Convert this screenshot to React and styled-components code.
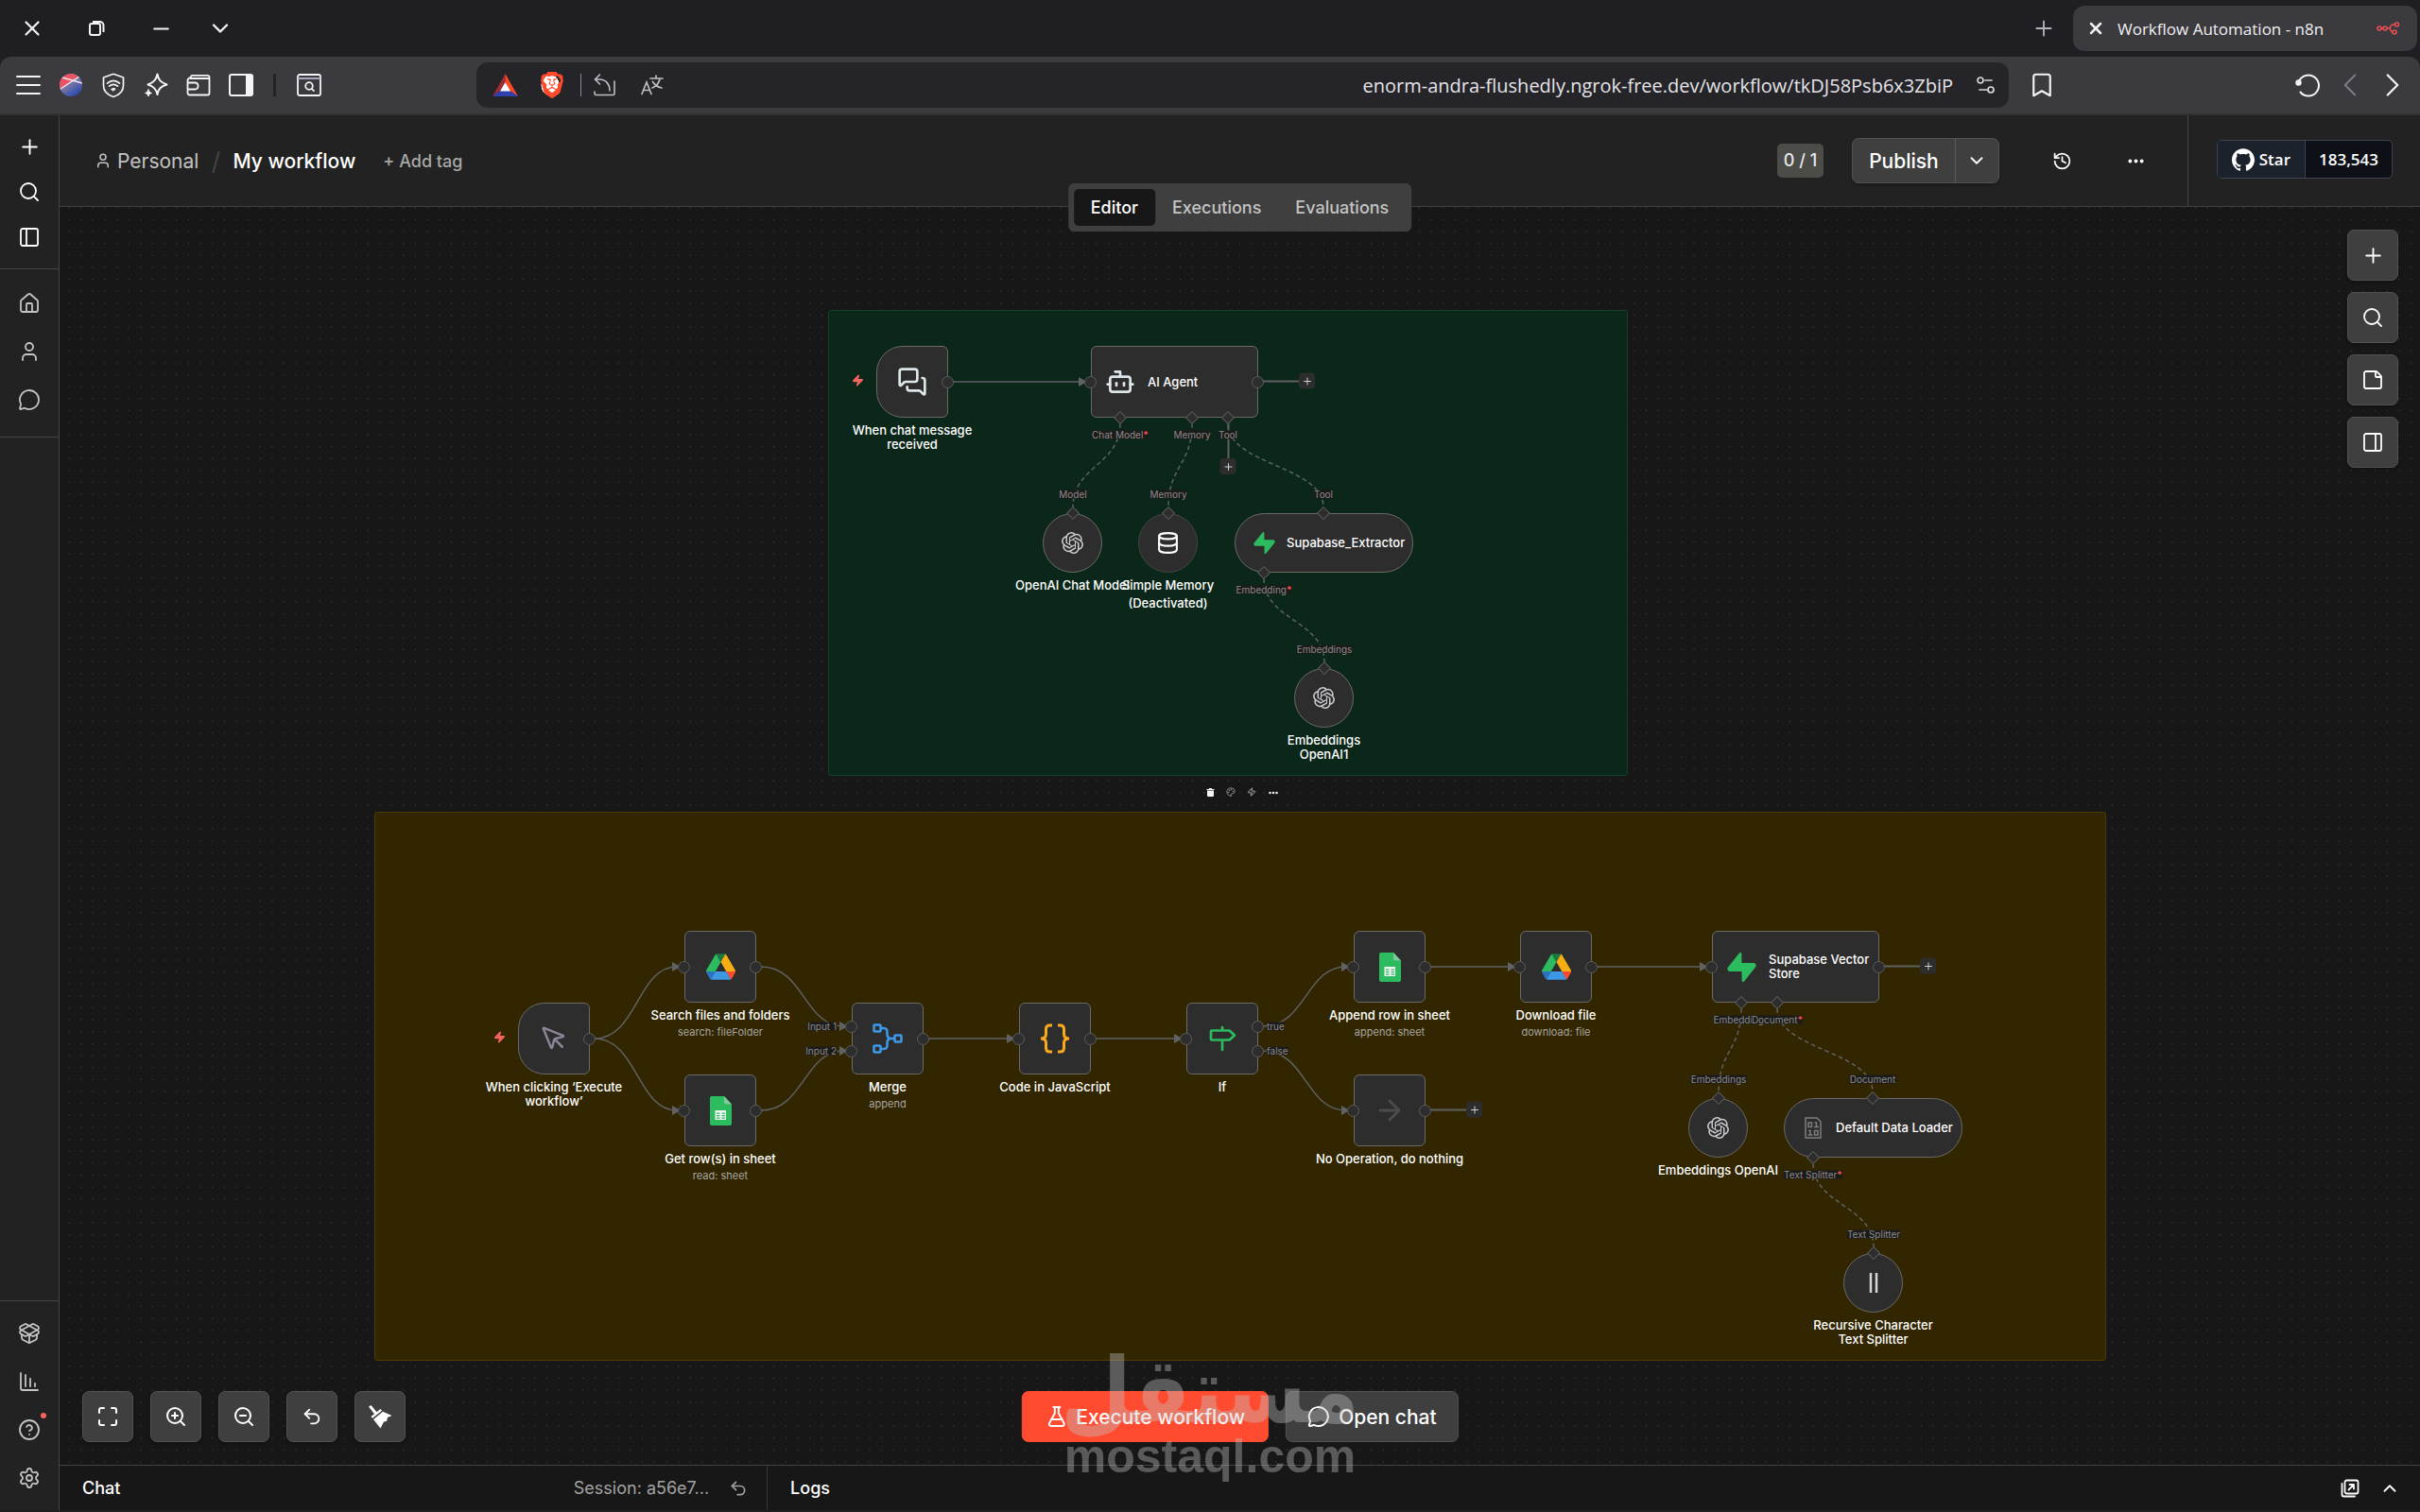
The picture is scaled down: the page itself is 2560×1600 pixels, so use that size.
import React, { useState } from 'react';
import styled, { createGlobalStyle, css } from 'styled-components';
import {
    Plus, Search, PanelLeft, PanelRight, House, User, MessageCircle, PackageOpen,
    ChartColumnDecreasing, CircleHelp, Settings, ChevronDown, ChevronUp, History,
    Ellipsis, StickyNote, Maximize, ZoomIn, ZoomOut, Undo2, FlaskConical,
    MessagesSquare, Bot, Database, MousePointer, ArrowRight, Palette, Zap,
    X, Minus, ChevronLeft, ChevronRight, Bookmark
} from 'lucide-react';
import { SiOpenai, SiSupabase, SiGithub, SiBrave } from 'react-icons/si';

const GlobalStyle = createGlobalStyle`
    * { box-sizing: border-box; }
    body {
        margin: 0;
        background: #1f1e23;
        color: #ffffff;
        font-family: Inter, "Liberation Sans", sans-serif;
    }
    button, input { font-family: inherit; }
    button {
        border: 0;
        padding: 0;
        background: none;
        color: inherit;
        cursor: pointer;
    }
    a { color: inherit; text-decoration: none; }
    svg { display: block; flex-shrink: 0; }
`;

/* ---------- icons ---------- */

const RestoreIcon = () => (
    <svg width="18" height="18" viewBox="0 0 18 18" fill="none" stroke="#f4f4f6" strokeWidth="2">
        <rect x="2" y="4" width="11" height="12" rx="2" />
        <path d="M5 2h7.5a4 4 0 0 1 4 4v7" />
    </svg>
);

const MenuIcon = () => (
    <svg width="26" height="22" viewBox="0 0 26 22" stroke="#f4f4f6" strokeWidth="2" strokeLinecap="round">
        <path d="M1 2h24M1 11h24M1 20h24" />
    </svg>
);

const BallIcon = () => (
    <svg width="24" height="24" viewBox="0 0 24 24">
        <defs>
            <clipPath id="ball"><circle cx="12" cy="12" r="12" /></clipPath>
            <linearGradient id="ballFill" x1="0" y1="0" x2="0.7" y2="1">
                <stop offset="0.4" stopColor="#8d83a3" />
                <stop offset="1" stopColor="#2848b0" />
            </linearGradient>
        </defs>
        <g clipPath="url(#ball)">
            <rect width="24" height="24" fill="url(#ballFill)" />
            <path d="M0 0h24L19 3 0 17z" fill="#ea5266" />
            <path d="M1 16 21 3M3 4l21 6" stroke="#f5e9ee" strokeWidth="1.4" />
        </g>
    </svg>
);

const ShieldIcon = () => (
    <svg width="24" height="27" viewBox="0 0 24 27" fill="none" stroke="#f4f4f6" strokeWidth="1.7" strokeLinecap="round">
        <path d="M12 1.3 22.5 5v8.5c0 6-4.5 10-10.5 12C6 23.5 1.5 19.5 1.5 13.5V5z" strokeLinejoin="round" />
        <path d="M5.5 11.2c4-3.4 9-3.4 13 0M7.5 14.2c3-2.4 6-2.4 9 0" />
        <path d="M9.8 17.2c1.5-1 3-1 4.4 0L12 19z" fill="#f4f4f6" strokeWidth="1" />
    </svg>
);

const SparkIcon = () => (
    <svg width="26" height="26" viewBox="0 0 26 26" fill="none" stroke="#f4f4f6" strokeWidth="2" strokeLinejoin="round">
        <path d="M14.5 1.5c1 6 3.5 8.5 10 11-6.5 2-9 4.5-10 10.5-1.3-6-4-8.5-10-10.5 6-2.5 8.7-5 10-11z" />
        <path d="M5 17.5c.5 2.500 1.2 3.2 3.5 4-2.3.7-3 1.4-3.5 3.5-.6-2.1-1.3-2.8-3.5-3.5 2.2-.8 2.9-1.5 3.5-4z" fill="#f4f4f6" strokeWidth="1" />
    </svg>
);

const WalletIcon = () => (
    <svg width="26" height="24" viewBox="0 0 26 24" fill="none" stroke="#f4f4f6" strokeWidth="1.8">
        <path d="M1.5 7.5c0-2 .8-2.8 2.500-3.2L6 1.8h16.5a2 2 0 0 1 2 2v16.7a2 2 0 0 1-2 2h-19a2 2 0 0 1-2-2z" />
        <path d="M4 5h20.5M2 9.5h7.5a3 3 0 0 1 3 3v1a3 3 0 0 1-3 3H2" />
    </svg>
);

const SplitIcon = () => (
    <svg width="26" height="24" viewBox="0 0 26 24">
        <rect x="1" y="1" width="24" height="22" rx="2" fill="none" stroke="#f4f4f6" strokeWidth="2" />
        <path d="M18 1h6a1.5 1.5 0 0 1 1.5 1.5v19A1.5 1.5 0 0 1 24 23h-6z" fill="#f4f4f6" />
    </svg>
);

const PageSearchIcon = () => (
    <svg width="26" height="24" viewBox="0 0 26 24" fill="none" stroke="#f4f4f6" strokeWidth="1.8">
        <rect x="1" y="1" width="24" height="22" rx="2" />
        <path d="M1 5h24" stroke="#b9b2cc" />
        <circle cx="13" cy="13" r="3.8" />
        <path d="m15.5 15.7 3 3" />
    </svg>
);

const BatIcon = () => (
    <svg width="27" height="24" viewBox="0 0 27 24">
        <path d="M13.5 0v9L8 18.5 0 24z" fill="#a02c33" />
        <path d="M13.5 0 27 24l-8.5-5.5L13.5 9z" fill="#ff4724" />
        <path d="m0 24 8-6h11l8 6z" fill="#2f3fae" />
        <path d="m13.5 9 5.5 9.5H8z" fill="#ffffff" />
    </svg>
);

const BraveLogo = styled.span`
    display: grid;
    place-items: center;
    width: 24px;
    height: 28px;
    border-radius: 10px;
    background: radial-gradient(#ffffff 55%, transparent 57%);
    color: #ff4a2b;
`;

const BypassIcon = () => (
    <svg width="24" height="24" viewBox="0 0 24 24" fill="none" stroke="#bdbdc2" strokeWidth="1.6" strokeLinecap="round">
        <path d="M1 19v2a1.5 1.5 0 0 0 1.5 1.5h18A1.5 1.5 0 0 0 22 21V8M2 6h4c7 0 11 5 11 12M6.5 1 1.500 6l5 5" />
    </svg>
);

const TranslateIcon = () => (
    <svg width="24" height="22" viewBox="0 0 24 22" fill="none" stroke="#bdbdc2" strokeWidth="1.7" strokeLinecap="round">
        <path d="M1 20.5 6 8l5 12.5M3 16.500h6M10 4h13M16 1v3M20 4.500c-1 4.500-4 8-8 9.500M12.500 7.500c2 3.500 5 5.500 9.500 6.500" />
    </svg>
);

const SiteIcon = () => (
    <svg width="20" height="18" viewBox="0 0 20 18" fill="none" stroke="#d8d8dc" strokeWidth="1.7">
        <circle cx="4" cy="4" r="3" />
        <path d="M9 4h7M3 14h8" strokeLinecap="round" />
        <circle cx="15" cy="14" r="3" />
    </svg>
);

const ReloadIcon = () => (
    <svg width="26" height="26" viewBox="0 0 26 26" fill="none" stroke="#f4f4f6" strokeWidth="2" strokeLinecap="round">
        <path d="M4 9a11 11 0 1 1 1.5 11.5" />
        <circle cx="3.5" cy="10.5" r="2.2" fill="#f4f4f6" />
    </svg>
);

const N8nIcon = () => (
    <svg width="25" height="14" viewBox="0 0 25 14" fill="none" stroke="#ea4f55" strokeWidth="1.6">
        <circle cx="3" cy="7" r="2" />
        <circle cx="9" cy="7" r="2" />
        <circle cx="21.5" cy="3" r="2" />
        <circle cx="19" cy="11" r="2" />
        <path d="M5 7h2M11 7h2c2.5 0 1.5-4 4-4h2.5M13 7c2.5 0 1.5 4 4 4" />
    </svg>
);

const BroomIcon = () => (
    <svg width="26" height="26" viewBox="0 0 26 26" fill="#ffffff">
        <path d="M1 2.5 3.5 1l7 8.5-2.5 2z" />
        <path d="m3.5 13 10-8 1.5 1.8-10 8z" />
        <path d="m6 16 10-8.3L25.5 12 21 14l-1 4-3 .5-3.5 7z" />
    </svg>
);

const DriveIcon = () => (
    <svg width="31" height="28" viewBox="0 0 87.3 78">
        <path d="m6.6 66.85 3.85 6.65c.8 1.4 1.95 2.5 3.3 3.3l13.75-23.8h-27.5c0 1.55.4 3.1 1.2 4.5z" fill="#2b72c0" />
        <path d="m43.65 25-13.75-23.8c-1.35.8-2.5 1.9-3.3 3.3l-25.4 44a9.06 9.06 0 0 0-1.2 4.5h27.5z" fill="#2dbb5f" />
        <path d="m73.55 76.8c1.35-.8 2.5-1.9 3.3-3.3l9.25-16c.8-1.4 1.2-2.95 1.2-4.5h-27.5l5.85 11.5z" fill="#ff4a32" />
        <path d="m43.65 25 13.75-23.8c-1.35-.8-2.9-1.2-4.5-1.2h-18.5c-1.6 0-3.15.45-4.5 1.2z" fill="#1a7a3f" />
        <path d="m59.8 53h-32.3l-13.75 23.8c1.35.8 2.9 1.2 4.5 1.2h50.8c1.6 0 3.15-.45 4.5-1.2z" fill="#3c98e4" />
        <path d="m73.4 26.5-12.7-22c-.8-1.4-1.95-2.5-3.3-3.3l-13.75 23.8 16.15 28h27.45c0-1.55-.4-3.1-1.2-4.5z" fill="#f7ae14" />
    </svg>
);

const SheetIcon = () => (
    <svg width="23" height="31" viewBox="0 0 23 31">
        <path d="M2 0h13l8 8.5V29a2 2 0 0 1-2 2H2a2 2 0 0 1-2-2V2a2 2 0 0 1 2-2z" fill="#2dbb5f" />
        <path d="M15 0v6.5a2 2 0 0 0 2 2h6z" fill="#7ec99a" />
        <rect x="5.5" y="15" width="11.5" height="10" fill="#f2f4f3" />
        <path d="M7 18.2h3.5M12.5 18.2H16M7 20.7h3.5M12.5 20.7H16M7 23.2h3.5M12.5 23.2H16" stroke="#2dbb5f" strokeWidth="1.2" />
    </svg>
);

const MergeIcon = () => (
    <svg width="32" height="32" viewBox="0 0 32 32" fill="none" stroke="#3c98e8" strokeWidth="2.6">
        <rect x="1.5" y="1.5" width="7" height="7" rx="1" />
        <rect x="1.5" y="23.5" width="7" height="7" rx="1" />
        <rect x="23.5" y="12.5" width="7" height="7" rx="1" />
        <path d="M8.5 5h3c4.5 0 4 3 4 6 0 3.5 1 5 4 5h4M8.5 27h3c4.5 0 4-3 4-6 0-3.5 1-5 4-5" />
    </svg>
);

const CodeIcon = () => (
    <svg width="30" height="32" viewBox="0 0 30 32" fill="none" stroke="#fba91b" strokeWidth="3">
        <path d="M12 2H9.5Q5.5 2 5.5 6v5.5Q5.5 16 0 16q5.5 0 5.5 4.5V26q0 4 4 4H12" />
        <path d="M18 2h2.5q4 0 4 4v5.5q0 4.5 5.5 4.5-5.5 0-5.5 4.5V26q0 4-4 4H18" />
    </svg>
);

const SignIcon = () => (
    <svg width="29" height="28" viewBox="0 0 29 28" fill="none" stroke="#2dbb5f" strokeWidth="2.7" strokeLinecap="round" strokeLinejoin="round">
        <path d="M3 5.5h18.5l5.5 5-5.5 5H3a1 1 0 0 1-1-1v-8a1 1 0 0 1 1-1zM14 2v3M14 16v10" />
    </svg>
);

const BinaryFileIcon = () => (
    <svg width="18" height="23" viewBox="0 0 18 23" fill="none" stroke="#7d7d7d" strokeWidth="1.5">
        <path d="M1 1h12l4 4v17H1z" />
        <rect x="4" y="6" width="3.5" height="4.5" />
        <path d="M10.5 6h2v4.5M10 10.5h5M4 14.5h2V19M3.5 19h5" />
        <rect x="10.5" y="14.5" width="3.5" height="4.5" />
    </svg>
);

const BarsIcon = () => (
    <svg width="10" height="21" viewBox="0 0 10 21" stroke="#d3d7dc" strokeWidth="2.5">
        <path d="M2 0v21M8 0v21" />
    </svg>
);

const TrashIcon = () => (
    <svg width="9" height="9" viewBox="0 0 9 9" fill="#f4f4f4">
        <path d="M3 0h3v1h2.5v1H.5V1H3zM1 2.5h7V8a1 1 0 0 1-1 1H2a1 1 0 0 1-1-1z" />
    </svg>
);

const PopOutIcon = () => (
    <svg width="20" height="20" viewBox="0 0 20 20" fill="none" stroke="#ffffff" strokeWidth="1.8" strokeLinecap="round" strokeLinejoin="round">
        <rect x="4.5" y="1.5" width="14" height="14" rx="2" />
        <path d="M1.500 5v11.500a2 2 0 0 0 2 2H15M8.500 11.500l5-5M9.500 6h4.500v4.500" />
    </svg>
);

const BoltIcon = () => <Zap size={13} color="#f8625f" fill="#f8625f" strokeWidth={2} />;

/* ---------- browser chrome ---------- */

const Browser = styled.div`
    display: flex;
    flex-direction: column;
    min-height: 100vh;
    padding-bottom: 2px;
`;

const TitleBar = styled.div`
    display: flex;
    align-items: center;
    height: 60px;
    padding-right: 3px;
    font-family: "Open Sans", "Noto Sans", sans-serif;
`;

const WindowButton = styled.button`
    display: grid;
    place-items: center;
    width: ${props => props.$narrow ? 57 : 68}px;
    height: 60px;
    color: #f4f4f6;
`;

const Spacer = styled.div`
    flex: 1;
`;

const NewTab = styled.button`
    display: grid;
    place-items: center;
    width: 62px;
    height: 48px;
    color: #b4b4ba;
`;

const Tab = styled.div`
    display: flex;
    align-items: center;
    gap: 13px;
    width: 364px;
    height: 48px;
    padding: 0 18px 0 14px;
    border-radius: 12px;
    background: #3b3a3f;
    font-size: 17px;
    color: #f0f0f2;

    span { flex: 1; white-space: nowrap; }
`;

const Toolbar = styled.div`
    display: flex;
    align-items: center;
    height: 62px;
    padding: 0 7px;
    border-bottom: 2px solid #323135;
    border-radius: 12px 12px 0 0;
    background: #3b3a3f;
`;

const ToolButton = styled.button`
    display: grid;
    place-items: center;
    width: ${props => props.$wide ? 50 : 45}px;
    height: 48px;
    color: ${props => props.$dim ? '#7d7c82' : '#f4f4f6'};
`;

const ToolDivider = styled.i`
    width: 3px;
    height: 24px;
    margin: 0 12px;
    background: #232227;
`;

const AddressBar = styled.div`
    display: flex;
    align-items: center;
    flex: 1;
    height: 48px;
    margin: 0 12px 0 155px;
    padding: 0 2px 0 8px;
    border-radius: 12px;
    background: #252429;

    i { width: 1px; height: 24px; margin-left: 7px; background: #8a898f; }
`;

const AddressInput = styled.input`
    flex: 1;
    height: 40px;
    padding: 0 12px 0 0;
    border: 0;
    outline: 0;
    background: transparent;
    color: #e4e4e8;
    font: 20px "Open Sans", "Noto Sans", sans-serif;
    text-align: right;
`;

const AfterAddress = styled.div`
    width: 236px;
`;

/* ---------- app shell ---------- */

const Shell = styled.div`
    display: flex;
    flex: 1;
    background: #171717;
`;

const Sidebar = styled.nav`
    display: flex;
    flex-direction: column;
    width: 63px;
    border-right: 1px solid #444444;
    background: #222222;
`;

const SideGroup = styled.div`
    display: flex;
    flex-direction: column;
    padding: ${props => props.$pad};
    border-top: ${props => props.$line ? '1px solid #444444' : '0'};
    color: ${props => props.$bright ? '#ffffff' : '#c4c4c4'};
`;

const SideButton = styled.button`
    position: relative;
    display: grid;
    place-items: center;
    height: ${props => props.$short ? 48 : 51}px;
`;

const RedDot = styled.i`
    position: absolute;
    top: 8px;
    left: 43px;
    width: 6px;
    height: 6px;
    border-radius: 50%;
    background: #f8625f;
`;

const Main = styled.main`
    display: flex;
    flex-direction: column;
    flex: 1;
    min-width: 0;
`;

const Header = styled.header`
    position: relative;
    display: flex;
    align-items: center;
    height: 97px;
    padding-left: 37px;
    border-bottom: 1px solid #3f3f3f;
    background: #222222;
    font-size: 21px;
`;

const Crumb = styled.a`
    display: flex;
    align-items: center;
    gap: 6px;
    color: #c2c2c2;
`;

const Slash = styled.span`
    width: 36px;
    color: #444444;
    font-size: 26px;
    text-align: center;
`;

const Title = styled.h1`
    margin: 0;
    font-size: 21px;
    font-weight: 500;
`;

const AddTag = styled.button`
    margin-left: 29px;
    color: #a8a8a8;
    font-size: 18px;
    font-weight: 500;
`;

const Count = styled.span`
    padding: 0 7px;
    border-radius: 5px;
    background: #4b4b48;
    color: #e8e8e8;
    font-size: 18px;
    font-weight: 500;
    line-height: 36px;
`;

const raised = css`
    border: 1px solid #525252;
    border-radius: 7px;
    background: #3f3f3f;
    color: #ffffff;
`;

const PublishGroup = styled.div`
    ${raised}
    display: flex;
    height: 48px;
    margin: 0 43px 0 30px;
    box-shadow: 0 2px 3px rgba(0, 0, 0, .25);
`;

const PublishButton = styled.button`
    padding: 0 17px;
    font-size: 21px;
    font-weight: 500;
`;

const PublishMore = styled.button`
    display: grid;
    place-items: center;
    width: 46px;
    border-left: 1px solid #5a5a5a;
`;

const HeaderIcon = styled.button`
    display: grid;
    place-items: center;
    width: 48px;
    height: 48px;
    margin-right: 30px;
`;

const StarBox = styled.div`
    display: flex;
    align-items: center;
    align-self: stretch;
    padding: 0 29px 3px 30px;
    border-left: 1px solid #444444;
`;

const StarLink = styled.a`
    display: flex;
    align-items: center;
    height: 41px;
    border: 1px solid #3d444d;
    border-radius: 5px;
    background: #0d1117;
    font: 600 17px "Open Sans", "Noto Sans", sans-serif;
    overflow: hidden;

    span { padding: 0 14px; }
    span:first-child {
        display: flex;
        align-items: center;
        gap: 5px;
        height: 100%;
        padding: 0 15px;
        border-right: 1px solid #3d444d;
        background: #1c222c;
    }
`;

const Tabs = styled.div`
    position: absolute;
    top: 72px;
    left: 50%;
    z-index: 2;
    display: flex;
    padding: 6px;
    border-radius: 6px;
    background: #3f3f3f;
    transform: translateX(-50%);
`;

const TabButton = styled.button`
    height: 39px;
    padding: 0 18px;
    border-radius: 5px;
    background: ${props => props.$active ? '#171717' : 'transparent'};
    color: ${props => props.$active ? '#ffffff' : '#c4c4c4'};
    font-size: 18px;
    font-weight: 500;
`;

/* ---------- canvas ---------- */

const Canvas = styled.section`
    position: relative;
    flex: 1;
    min-height: 1331px;
    overflow: hidden;
`;

const Layer = styled.svg`
    position: absolute;
    inset: 0;
    width: 100%;
    height: 100%;
    pointer-events: none;
`;

const Sticky = styled.div`
    position: absolute;
    left: ${props => props.$x}px;
    top: ${props => props.$y}px;
    width: ${props => props.$w}px;
    height: ${props => props.$h}px;
    border: 1px solid ${props => props.$line};
    border-radius: 3px;
    background: ${props => props.$fill};
`;

const StickyTools = styled.div`
    position: absolute;
    left: 1212px;
    top: 614px;
    display: flex;
    gap: 12px;
    align-items: center;

    button { width: 10px; height: 10px; display: grid; place-items: center; }
`;

const NodeBox = styled.div`
    position: absolute;
    left: ${props => props.$x}px;
    top: ${props => props.$y}px;
`;

const Shape = styled.div`
    display: flex;
    align-items: center;
    justify-content: ${props => props.$slot ? 'flex-start' : 'center'};
    width: ${props => props.$w}px;
    height: ${props => props.$h}px;
    padding-left: ${props => props.$lead || 0}px;
    border: 1px solid ${props => props.$off ? '#454545' : '#6b6a66'};
    border-radius: ${props => props.$radius};
    background: #2d2d2d;
    color: #ffffff;
`;

const NodeIcon = styled.span`
    display: grid;
    place-items: center;
    width: ${props => props.$slot ? `${props.$slot}px` : 'auto'};
`;

const InnerName = styled.span`
    font-size: 13px;
    font-weight: 500;
    line-height: 15px;
    white-space: pre;
`;

const Caption = styled.div`
    position: absolute;
    top: 100%;
    left: 50%;
    padding-top: 6px;
    transform: translateX(-50%);
    font-size: 13px;
    font-weight: 500;
    line-height: 15px;
    text-align: center;
    white-space: pre;

    small {
        display: block;
        margin-top: 3px;
        color: #a8a4a0;
        font-size: 11px;
        font-weight: 400;
    }

    em { display: block; margin-top: 4px; font-style: normal; }
`;

const Dot = styled.i`
    position: absolute;
    left: ${props => props.$x}px;
    top: ${props => props.$y}px;
    width: 13px;
    height: 13px;
    margin: -6px 0 0 -7px;
    border: 1px solid #5c5c5c;
    border-radius: 50%;
    background: #2d2d2d;
`;

const Diamond = styled.i`
    position: absolute;
    left: ${props => props.$x}px;
    top: ${props => props.$y}px;
    width: 10px;
    height: 10px;
    margin: -5px;
    border: 1px solid #5c5c5c;
    background: #2d2d2d;
    transform: rotate(45deg);
`;

const PortLabel = styled.span`
    position: absolute;
    left: ${props => props.$x}px;
    top: ${props => props.$y}px;
    transform: translate(${props => props.$align || '-50%'}, -50%);
    background: #1c1b1b;
    color: #8c8a88;
    font-size: 10px;
    line-height: 9px;
    white-space: nowrap;

    b { color: #f8524f; }
`;

const AddNext = styled.div`
    position: absolute;
    left: ${props => props.$x}px;
    top: ${props => props.$y}px;
    display: flex;
    flex-direction: ${props => props.$down ? 'column' : 'row'};
    align-items: center;
    transform: ${props => props.$down ? 'translateX(-50%)' : 'translateY(-50%)'};

    i {
        width: ${props => props.$down ? '2px' : '38px'};
        height: ${props => props.$down ? '38px' : '2px'};
        background: #5f6163;
    }

    button {
        display: grid;
        place-items: center;
        width: 17px;
        height: 17px;
        border-radius: 4px;
        background: #2d2d2d;
        color: #d0d0d0;
    }
`;

const TriggerMark = styled.span`
    position: absolute;
    right: calc(100% + 13px);
    top: 30px;
`;

const sizes = {
    trigger: { w: 76, h: 76, radius: '28px 6px 6px 28px' },
    square: { w: 76, h: 76, radius: '6px' },
    wide: { w: 177, h: 76, radius: '6px', lead: 1, slot: 58 },
    circle: { w: 63, h: 63, radius: '50%' },
    pill: { w: 189, h: 63, radius: '32px', lead: 6, slot: 48 }
};

const openai = <SiOpenai size={23} color="#c9cbce" />;

// left/right are y offsets of round ports, top/bottom are x offsets of diamonds
const nodes = [
    { x: 864, y: 147, kind: 'trigger', icon: <MessagesSquare size={32} color="#dde7ea" />, name: 'When chat message\nreceived', right: [[38]] },
    { x: 1091, y: 147, kind: 'wide', icon: <Bot size={32} color="#dde7ea" />, inner: 'AI Agent', left: [[38]], right: [[38]],
        bottom: [[31, 'Chat Model', true], [107, 'Memory'], [145, 'Tool']], next: true, nextDown: 145 },
    { x: 1040, y: 324, kind: 'circle', icon: openai, name: 'OpenAI Chat Model', top: [[32, 'Model']] },
    { x: 1141, y: 324, kind: 'circle', icon: <Database size={25} />, name: 'Simple Memory', note: '(Deactivated)', off: true, top: [[32, 'Memory']] },
    { x: 1243, y: 324, kind: 'pill', icon: <SiSupabase size={23} color="#2dbb5f" />, inner: 'Supabase_Extractor', top: [[94, 'Tool']], bottom: [[31, 'Embedding', true]] },
    { x: 1306, y: 488, kind: 'circle', icon: openai, name: 'Embeddings\nOpenAI1', top: [[32, 'Embeddings']] },
    { x: 485, y: 842, kind: 'trigger', icon: <MousePointer size={30} color="#8b8597" />, name: 'When clicking ‘Execute\nworkflow’', right: [[38]] },
    { x: 661, y: 766, kind: 'square', icon: <DriveIcon />, name: 'Search files and folders', sub: 'search: fileFolder', left: [[38]], right: [[38]] },
    { x: 661, y: 918, kind: 'square', icon: <SheetIcon />, name: 'Get row(s) in sheet', sub: 'read: sheet', left: [[38]], right: [[38]] },
    { x: 838, y: 842, kind: 'square', icon: <MergeIcon />, name: 'Merge', sub: 'append', left: [[25, 'Input 1'], [51, 'Input 2']], right: [[38]] },
    { x: 1015, y: 842, kind: 'square', icon: <CodeIcon />, name: 'Code in JavaScript', left: [[38]], right: [[38]] },
    { x: 1192, y: 842, kind: 'square', icon: <SignIcon />, name: 'If', left: [[38]], right: [[25, 'true'], [51, 'false']] },
    { x: 1369, y: 766, kind: 'square', icon: <SheetIcon />, name: 'Append row in sheet', sub: 'append: sheet', left: [[38]], right: [[38]] },
    { x: 1369, y: 918, kind: 'square', icon: <ArrowRight size={34} color="#4c4c4c" strokeWidth={2} />, name: 'No Operation, do nothing', left: [[38]], right: [[38]], next: true },
    { x: 1545, y: 766, kind: 'square', icon: <DriveIcon />, name: 'Download file', sub: 'download: file', left: [[38]], right: [[38]] },
    { x: 1748, y: 766, kind: 'wide', icon: <SiSupabase size={31} color="#2dbb5f" />, inner: 'Supabase Vector\nStore', left: [[38]], right: [[38]],
        bottom: [[31, 'Embedding', true], [69, 'Document', true]], next: true },
    { x: 1723, y: 943, kind: 'circle', icon: openai, name: 'Embeddings OpenAI', top: [[32, 'Embeddings']] },
    { x: 1824, y: 943, kind: 'pill', icon: <BinaryFileIcon />, inner: 'Default Data Loader', top: [[94, 'Document']], bottom: [[31, 'Text Splitter', true]] },
    { x: 1887, y: 1107, kind: 'circle', icon: <BarsIcon />, name: 'Recursive Character\nText Splitter', top: [[32, 'Text Splitter']] }
];

const mainEdges = [
    [940, 185, 1091, 185],
    [561, 880, 661, 804], [561, 880, 661, 956],
    [737, 804, 838, 867], [737, 956, 838, 893],
    [914, 880, 1015, 880], [1091, 880, 1192, 880],
    [1268, 867, 1369, 804], [1268, 893, 1369, 956],
    [1445, 804, 1545, 804], [1621, 804, 1748, 804]
];

const subEdges = [
    [1122, 223, 1072, 324], [1198, 223, 1173, 324], [1236, 223, 1337, 324],
    [1274, 387, 1338, 488], [1779, 842, 1755, 943], [1817, 842, 1918, 943],
    [1855, 1006, 1919, 1107]
];

const Node = ({ x, y, kind, icon, inner, name, sub, note, off, left = [], right = [], top = [], bottom = [], next, nextDown }) => {
    const { w, h, radius, lead, slot } = sizes[kind];
    return (
        <NodeBox $x={x} $y={y}>
            {kind === 'trigger' && <TriggerMark><BoltIcon /></TriggerMark>}
            <Shape $w={w} $h={h} $radius={radius} $off={off} $lead={lead} $slot={slot}>
                <NodeIcon $slot={slot}>{icon}</NodeIcon>
                {inner && <InnerName>{inner}</InnerName>}
            </Shape>
            {nextDown && <AddNext $down $x={nextDown} $y={h + 5}><i /><button aria-label="Add tool"><Plus size={12} /></button></AddNext>}
            {left.map(([p, label]) => (
                <React.Fragment key={p}>
                    <Dot $x={0} $y={p} />
                    {label && <PortLabel $x={-16} $y={p} $align="-100%">{label}</PortLabel>}
                </React.Fragment>
            ))}
            {right.map(([p, label]) => (
                <React.Fragment key={p}>
                    <Dot $x={w} $y={p} />
                    {label && <PortLabel $x={w + 9} $y={p} $align="0">{label}</PortLabel>}
                </React.Fragment>
            ))}
            {top.map(([p, label]) => (
                <React.Fragment key={p}>
                    <Diamond $x={p} $y={0} />
                    <PortLabel $x={p} $y={-20}>{label}</PortLabel>
                </React.Fragment>
            ))}
            {bottom.map(([p, label, required]) => (
                <React.Fragment key={p}>
                    <Diamond $x={p} $y={h} />
                    <PortLabel $x={p} $y={h + 18}>{label}{required && <b>*</b>}</PortLabel>
                </React.Fragment>
            ))}
            {next && <AddNext $x={w + 5} $y={37}><i /><button aria-label="Add node"><Plus size={12} /></button></AddNext>}
            {name && (
                <Caption>
                    {name}
                    {sub && <small>{sub}</small>}
                    {note && <em>{note}</em>}
                </Caption>
            )}
        </NodeBox>
    );
};

const Edges = () => (
    <Layer fill="none" stroke="#5f6163" strokeWidth="1.5">
        {mainEdges.map(([x1, y1, x2, y2], i) => {
            const mid = (x1 + x2) / 2;
            return (
                <g key={i}>
                    <path d={`M${x1 + 5} ${y1}C${mid} ${y1} ${mid} ${y2} ${x2 - 8} ${y2}`} />
                    <path d={`M${x2 - 13} ${y2 - 5}l9 5-9 5z`} fill="#5f6163" stroke="none" />
                </g>
            );
        })}
        {subEdges.map(([x1, y1, x2, y2], i) => {
            const mid = (y1 + y2) / 2;
            return <path key={i} strokeDasharray="4.7 3.2" d={`M${x1} ${y1 + 6}C${x1} ${mid} ${x2} ${mid} ${x2} ${y2 - 6}`} />;
        })}
    </Layer>
);

const Grid = () => (
    <Layer>
        <defs>
            <pattern id="dots" x="3.7" y="7" width="12.64" height="12.64" patternUnits="userSpaceOnUse">
                <circle cx="6.32" cy="6.32" r="0.7" fill="#3c3c3c" />
            </pattern>
        </defs>
        <rect width="100%" height="100%" fill="url(#dots)" />
    </Layer>
);

const SquareButton = styled.button`
    ${raised}
    display: grid;
    place-items: center;
    width: 54px;
    height: 54px;
    box-shadow: 0 2px 3px rgba(0, 0, 0, .25);
`;

const RightControls = styled.div`
    position: absolute;
    top: 24px;
    right: 23px;
    display: flex;
    flex-direction: column;
    gap: 12px;
`;

const LeftControls = styled.div`
    position: absolute;
    bottom: 24px;
    left: 24px;
    display: flex;
    gap: 18px;
`;

const RunControls = styled.div`
    position: absolute;
    bottom: 24px;
    left: 50%;
    display: flex;
    gap: 18px;
    transform: translateX(-50%);
`;

const RunButton = styled.button`
    ${raised}
    display: flex;
    align-items: center;
    gap: 9px;
    height: 54px;
    padding: 0 22px;
    font-size: 21px;
    font-weight: 500;
    white-space: nowrap;

    ${props => props.$primary && css`
        padding: 0 24px;
        border-color: #ff4c31;
        background: #ff4c31;
    `}
`;

const BottomPanel = styled.footer`
    display: flex;
    height: 48px;
    border-top: 1px solid #444444;
    font-size: 18px;
    font-weight: 500;
`;

const ChatPanel = styled.div`
    display: flex;
    align-items: center;
    width: 30%;
    padding: 0 19px 0 24px;
    border-right: 1px solid #383838;
`;

const Session = styled.span`
    margin-left: auto;
    color: #a3a3a3;
    font-weight: 400;
`;

const PanelButton = styled.button`
    display: grid;
    place-items: center;
    width: 22px;
    height: 24px;
    margin-left: 20px;
    color: ${props => props.$dim ? '#a3a3a3' : '#ffffff'};
`;

const LogsPanel = styled.div`
    display: flex;
    align-items: center;
    flex: 1;
    padding: 0 21px 0 24px;
`;

const Watermark = styled.div`
    position: fixed;
    bottom: 34px;
    left: 50%;
    z-index: 5;
    display: flex;
    flex-direction: column;
    align-items: center;
    opacity: .39;
    color: #c5c5c5;
    font: bold 50px/50px "Liberation Sans", sans-serif;
    pointer-events: none;
    transform: translateX(-50%);

    span {
        font-family: "DejaVu Sans Condensed", "DejaVu Sans", sans-serif;
        font-size: 96px;
        line-height: 88px;
    }
`;

const tabNames = ['Editor', 'Executions', 'Evaluations'];

const App = () => {
    const [tab, setTab] = useState('Editor');

    return (
        <>
            <GlobalStyle />
            <Browser>
                <TitleBar>
                    <WindowButton aria-label="Close window"><X size={26} strokeWidth={2} /></WindowButton>
                    <WindowButton aria-label="Restore window"><RestoreIcon /></WindowButton>
                    <WindowButton aria-label="Minimize window"><Minus size={25} /></WindowButton>
                    <WindowButton $narrow aria-label="Search tabs"><ChevronDown size={28} /></WindowButton>
                    <Spacer />
                    <NewTab aria-label="New tab"><Plus size={26} strokeWidth={1.7} /></NewTab>
                    <Tab>
                        <X size={20} strokeWidth={3} />
                        <span>Workflow Automation - n8n</span>
                        <N8nIcon />
                    </Tab>
                </TitleBar>
                <Toolbar>
                    <ToolButton aria-label="Menu"><MenuIcon /></ToolButton>
                    <ToolButton aria-label="Profile"><BallIcon /></ToolButton>
                    <ToolButton aria-label="VPN"><ShieldIcon /></ToolButton>
                    <ToolButton aria-label="Assistant"><SparkIcon /></ToolButton>
                    <ToolButton aria-label="Wallet"><WalletIcon /></ToolButton>
                    <ToolButton aria-label="Side panel"><SplitIcon /></ToolButton>
                    <ToolDivider />
                    <ToolButton aria-label="Search page"><PageSearchIcon /></ToolButton>
                    <AddressBar>
                        <ToolButton aria-label="Rewards"><BatIcon /></ToolButton>
                        <ToolButton $wide aria-label="Shields"><BraveLogo><SiBrave size={28} /></BraveLogo></ToolButton>
                        <i />
                        <ToolButton $wide aria-label="Open in app"><BypassIcon /></ToolButton>
                        <ToolButton $wide aria-label="Translate"><TranslateIcon /></ToolButton>
                        <AddressInput aria-label="Address" readOnly value="enorm-andra-flushedly.ngrok-free.dev/workflow/tkDJ58Psb6x3ZbiP" />
                        <ToolButton aria-label="Site settings"><SiteIcon /></ToolButton>
                    </AddressBar>
                    <ToolButton aria-label="Bookmark"><Bookmark size={30} strokeWidth={1.7} /></ToolButton>
                    <AfterAddress />
                    <ToolButton aria-label="Reload"><ReloadIcon /></ToolButton>
                    <ToolButton $dim aria-label="Back"><ChevronLeft size={42} strokeWidth={1.2} /></ToolButton>
                    <ToolButton aria-label="Forward"><ChevronRight size={42} strokeWidth={1.3} /></ToolButton>
                </Toolbar>

                <Shell>
                    <Sidebar>
                        <SideGroup $bright $pad="9px 0">
                            <SideButton $short aria-label="Create"><Plus size={25} strokeWidth={1.8} /></SideButton>
                            <SideButton $short aria-label="Search"><Search size={24} strokeWidth={1.8} /></SideButton>
                            <SideButton $short aria-label="Toggle sidebar"><PanelLeft size={24} strokeWidth={1.8} /></SideButton>
                        </SideGroup>
                        <SideGroup $line $pad="10px 0 14px">
                            <SideButton aria-label="Overview"><House size={24} strokeWidth={1.8} /></SideButton>
                            <SideButton aria-label="Personal"><User size={24} strokeWidth={1.8} /></SideButton>
                            <SideButton aria-label="Chat"><MessageCircle size={24} strokeWidth={1.8} /></SideButton>
                        </SideGroup>
                        <SideGroup $line $pad="0" />
                        <Spacer />
                        <SideGroup $line $pad="8px 0 9px">
                            <SideButton aria-label="Templates"><PackageOpen size={24} strokeWidth={1.8} /></SideButton>
                            <SideButton aria-label="Insights"><ChartColumnDecreasing size={24} strokeWidth={1.8} /></SideButton>
                            <SideButton aria-label="Help"><CircleHelp size={24} strokeWidth={1.8} /><RedDot /></SideButton>
                            <SideButton aria-label="Settings"><Settings size={24} strokeWidth={1.8} /></SideButton>
                        </SideGroup>
                    </Sidebar>

                    <Main>
                        <Header>
                            <Crumb href="#"><User size={18} />Personal</Crumb>
                            <Slash>/</Slash>
                            <Title>My workflow</Title>
                            <AddTag>+ Add tag</AddTag>
                            <Spacer />
                            <Count>0 / 1</Count>
                            <PublishGroup>
                                <PublishButton>Publish</PublishButton>
                                <PublishMore aria-label="Publish options"><ChevronDown size={22} /></PublishMore>
                            </PublishGroup>
                            <HeaderIcon aria-label="History"><History size={21} /></HeaderIcon>
                            <HeaderIcon aria-label="More"><Ellipsis size={21} strokeWidth={2.5} /></HeaderIcon>
                            <StarBox>
                                <StarLink href="#">
                                    <span><SiGithub size={24} />Star</span>
                                    <span>183,543</span>
                                </StarLink>
                            </StarBox>
                            <Tabs>
                                {tabNames.map(name => (
                                    <TabButton key={name} $active={tab === name} onClick={() => setTab(name)}>{name}</TabButton>
                                ))}
                            </Tabs>
                        </Header>

                        <Canvas>
                            <Grid />
                            <Sticky $x={813} $y={109} $w={846} $h={493} $fill="#0b2719" $line="#15402a" />
                            <Sticky $x={333} $y={640} $w={1832} $h={581} $fill="#322600" $line="#4f3a00" />
                            <StickyTools>
                                <button aria-label="Delete"><TrashIcon /></button>
                                <button aria-label="Colour"><Palette size={10} color="#a0a0a0" /></button>
                                <button aria-label="Unlock"><Zap size={10} color="#c8c8c8" /></button>
                                <button aria-label="More"><Ellipsis size={12} strokeWidth={3} /></button>
                            </StickyTools>
                            <Edges />
                            {nodes.map(node => <Node key={`${node.x}-${node.y}`} {...node} />)}

                            <RightControls>
                                <SquareButton aria-label="Add node"><Plus size={25} strokeWidth={1.8} /></SquareButton>
                                <SquareButton aria-label="Find node"><Search size={24} strokeWidth={1.8} /></SquareButton>
                                <SquareButton aria-label="Add note"><StickyNote size={24} strokeWidth={1.8} /></SquareButton>
                                <SquareButton aria-label="Open panel"><PanelRight size={24} strokeWidth={1.8} /></SquareButton>
                            </RightControls>
                            <LeftControls>
                                <SquareButton aria-label="Fit view"><Maximize size={24} /></SquareButton>
                                <SquareButton aria-label="Zoom in"><ZoomIn size={24} /></SquareButton>
                                <SquareButton aria-label="Zoom out"><ZoomOut size={24} /></SquareButton>
                                <SquareButton aria-label="Undo"><Undo2 size={22} /></SquareButton>
                                <SquareButton aria-label="Tidy up"><BroomIcon /></SquareButton>
                            </LeftControls>
                            <RunControls>
                                <RunButton $primary><FlaskConical size={24} />Execute workflow</RunButton>
                                <RunButton><MessageCircle size={24} />Open chat</RunButton>
                            </RunControls>
                        </Canvas>

                        <BottomPanel>
                            <ChatPanel>
                                Chat
                                <Session>Session: a56e7...</Session>
                                <PanelButton $dim aria-label="Reset session"><Undo2 size={20} /></PanelButton>
                            </ChatPanel>
                            <LogsPanel>
                                Logs
                                <Spacer />
                                <PanelButton aria-label="Pop out"><PopOutIcon /></PanelButton>
                                <PanelButton aria-label="Expand"><ChevronUp size={22} /></PanelButton>
                            </LogsPanel>
                        </BottomPanel>
                    </Main>
                </Shell>
            </Browser>
            <Watermark>
                <span lang="ar" dir="rtl">مستقل</span>
                mostaql.com
            </Watermark>
        </>
    );
};

export default App;
